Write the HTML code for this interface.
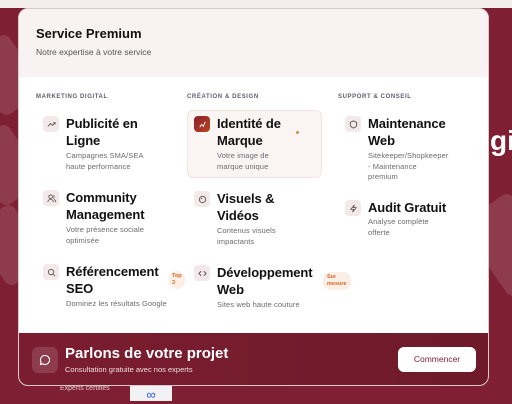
<!DOCTYPE html>
<html><head><meta charset="utf-8"><style>
*{margin:0;padding:0;box-sizing:border-box}
body{width:512px;height:401px;overflow:hidden;background:#7e1f33;font-family:"Liberation Sans",sans-serif;position:relative}
.a{position:absolute}
.top{left:0;top:0;width:512px;height:8px;background:#f3eeec}
.deco{background:rgba(255,255,255,0.13);border-radius:8px;transform:rotate(-35deg)}
.panel{left:18px;top:8px;width:471px;height:378px;background:#fff;border-radius:10px;overflow:hidden;border:1px solid #d9c9cc}
.hdr{left:0;top:0;width:471px;height:68px;background:#f8f3f2}
.lbl{font-size:6px;font-weight:bold;letter-spacing:.6px;color:#5b5d6b}
.ic{width:16px;height:16px;border-radius:4px;background:#f3e9ea;display:flex;align-items:center;justify-content:center}
.t{font-size:13px;font-weight:bold;color:#111;line-height:16.5px;letter-spacing:-.1px}
.d{font-size:7.5px;color:#6a6a72;line-height:10.5px;letter-spacing:.1px}
.tag{font-size:5.5px;font-weight:bold;color:#d2691e;background:#fbeee6;border-radius:8px;padding:2px 4px;line-height:7px}
.ft{left:0;top:324px;width:471px;height:54px;background:linear-gradient(90deg,#7b1d30,#6e1a2a)}
</style></head><body>
<div class="a top"></div>
<div class="a deco" style="left:-20px;top:40px;width:50px;height:70px"></div>
<div class="a deco" style="left:-20px;top:130px;width:50px;height:70px"></div>
<div class="a deco" style="left:-15px;top:210px;width:50px;height:70px"></div>
<div class="a deco" style="left:480px;top:200px;width:60px;height:90px"></div>
<div class="a" style="left:490px;top:125px;font-size:28px;font-weight:bold;color:#fff">gi</div>
<div class="a" style="left:60px;top:385px;font-size:7px;color:#e8cdd2">Experts certifiés</div>
<div class="a" style="left:130px;top:386px;width:42px;height:15px;background:#f2f2f4;color:#2d5be3;font-size:13px;text-align:center;line-height:18px">∞</div>
<div class="a panel">
 <div class="a hdr"></div>
 <div class="a" style="left:17px;top:17px;font-size:13px;font-weight:bold;color:#111">Service Premium</div>
 <div class="a" style="left:17px;top:38px;font-size:8.5px;color:#555">Notre expertise à votre service</div>
 <div class="a lbl" style="left:17px;top:85px">MARKETING DIGITAL</div>
 <div class="a lbl" style="left:168px;top:85px">CRÉATION &amp; DESIGN</div>
 <div class="a lbl" style="left:319px;top:85px">SUPPORT &amp; CONSEIL</div>

 <div class="a" style="left:168px;top:101px;width:135px;height:68px;background:#faf4f2;border-radius:6px;border:1px solid #f1e6e3"></div>

 <div class="a ic" style="left:24px;top:107px"><svg width="9" height="9" viewBox="0 0 10 10"><path d="M1 7l3-3 2 2 3-3M7 3h2v2" stroke="#555" fill="none" stroke-width="1"/></svg></div>
 <div class="a t" style="left:47px;top:107px">Publicité en<br>Ligne</div>
 <div class="a d" style="left:47px;top:142px">Campagnes SMA/SEA<br>haute performance</div>

 <div class="a ic" style="left:24px;top:181px"><svg width="9" height="9" viewBox="0 0 10 10"><circle cx="4" cy="3" r="2" stroke="#555" fill="none"/><path d="M1 9c0-2 1.5-3 3-3s3 1 3 3M7 1.5a2 2 0 010 3.5M8 6c1 .5 1.5 1.5 1.5 3" stroke="#555" fill="none" stroke-width=".9"/></svg></div>
 <div class="a t" style="left:47px;top:181px">Community<br>Management</div>
 <div class="a d" style="left:47px;top:216px">Votre présence sociale<br>optimisée</div>

 <div class="a ic" style="left:24px;top:255px"><svg width="9" height="9" viewBox="0 0 10 10"><circle cx="4.5" cy="4.5" r="3" stroke="#555" fill="none"/><path d="M7 7l2 2" stroke="#555"/></svg></div>
 <div class="a t" style="left:47px;top:255px">Référencement<br>SEO</div>
 <div class="a tag" style="left:150px;top:262px;padding:2px 3px">Top<br>3</div>
 <div class="a d" style="left:47px;top:290px">Dominez les résultats Google</div>

 <div class="a ic" style="left:175px;top:107px;background:linear-gradient(135deg,#8a1f2e,#b8451f)"><svg width="9" height="9" viewBox="0 0 10 10"><path d="M2 8l2-3 2 2 2-5" stroke="#fff" fill="none"/></svg></div>
 <div class="a t" style="left:198px;top:107px">Identité de<br>Marque</div>
 <div class="a" style="left:277px;top:122px;width:3px;height:3px;border-radius:50%;background:#e08a5a"></div>
 <div class="a d" style="left:198px;top:142px">Votre image de<br>marque unique</div>

 <div class="a ic" style="left:175px;top:182px"><svg width="9" height="9" viewBox="0 0 10 10"><circle cx="5" cy="5" r="3.5" stroke="#555" fill="none"/><circle cx="4" cy="4" r=".7" fill="#555"/></svg></div>
 <div class="a t" style="left:198px;top:182px">Visuels &amp;<br>Vidéos</div>
 <div class="a d" style="left:198px;top:217px">Contenus visuels<br>impactants</div>

 <div class="a ic" style="left:175px;top:256px"><svg width="9" height="9" viewBox="0 0 10 10"><path d="M3.5 2.5L1 5l2.5 2.5M6.5 2.5L9 5 6.5 7.5" stroke="#555" fill="none"/></svg></div>
 <div class="a t" style="left:198px;top:256px">Développement<br>Web</div>
 <div class="a tag" style="left:304px;top:263px">Sur<br>mesure</div>
 <div class="a d" style="left:198px;top:291px">Sites web haute couture</div>

 <div class="a ic" style="left:326px;top:107px"><svg width="9" height="9" viewBox="0 0 10 10"><path d="M5 1l3.5 1.5v3C8.5 7.5 5 9 5 9S1.5 7.5 1.5 5.5v-3z" stroke="#555" fill="none"/></svg></div>
 <div class="a t" style="left:349px;top:107px">Maintenance<br>Web</div>
 <div class="a d" style="left:349px;top:142px">Sitekeeper/Shopkeeper<br>- Maintenance<br>premium</div>

 <div class="a ic" style="left:326px;top:191px"><svg width="9" height="9" viewBox="0 0 10 10"><path d="M6 1L2 6h3l-1 3 4-5H5z" stroke="#555" fill="none" stroke-width=".9"/></svg></div>
 <div class="a t" style="left:349px;top:191px">Audit Gratuit</div>
 <div class="a d" style="left:349px;top:208px">Analyse complète<br>offerte</div>

 <div class="a ft"></div>
 <div class="a" style="left:13px;top:338px;width:26px;height:26px;border-radius:6px;background:rgba(255,255,255,0.14);display:flex;align-items:center;justify-content:center"><svg width="12" height="12" viewBox="0 0 12 12"><path d="M6 1.5a4.5 4.5 0 11-2.2 8.4L1.5 10.5l.6-2.2A4.5 4.5 0 016 1.5z" stroke="#fff" fill="none" stroke-width="1.1"/></svg></div>
 <div class="a" style="left:46px;top:336px;font-size:15px;font-weight:bold;color:#fff">Parlons de votre projet</div>
 <div class="a" style="left:46px;top:356px;font-size:7.5px;color:#f0dde0">Consultation gratuite avec nos experts</div>
 <div class="a" style="left:379px;top:338px;width:78px;height:25px;background:#fff;border-radius:6px;color:#7b1d30;font-size:8.5px;text-align:center;line-height:25px">Commencer</div>
</div>
</body></html>
